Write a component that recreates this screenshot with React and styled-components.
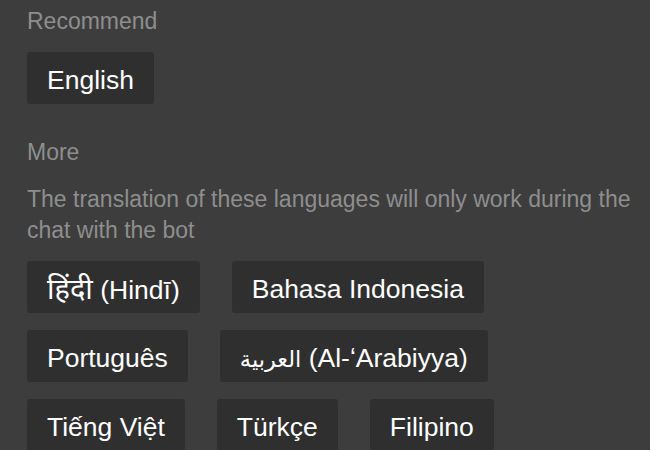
import React from 'react';
import styled, { createGlobalStyle } from 'styled-components';

const GlobalStyle = createGlobalStyle`
  html, body {
    margin: 0;
    padding: 0;
    background: #3d3d3d;
  }
  body {
    font-family: "Liberation Sans", Arial, "DejaVu Sans", "Noto Sans", sans-serif;
  }
`;

const Panel = styled.div`
  width: 650px;
  height: 450px;
  box-sizing: border-box;
  padding: 5px 8px 0 27px;
  background: #3d3d3d;
  overflow: hidden;
`;

const Label = styled.div`
  font-size: 23px;
  line-height: 32px;
  color: #8e8e8e;
  margin-top: ${(p) => p.$top || 0}px;
`;

const Note = styled.p`
  margin: 16px 0 0;
  font-size: 23px;
  line-height: 31px;
  color: #8e8e8e;
`;

const ChipList = styled.div`
  display: flex;
  flex-wrap: wrap;
  column-gap: 32px;
  row-gap: 17px;
  margin-top: ${(p) => p.$top}px;
`;

const Chip = styled.button`
  height: 52px;
  box-sizing: border-box;
  padding: 4px 20px 0;
  border: none;
  border-radius: 3px;
  background: #2f2f2f;
  color: #ffffff;
  font-family: inherit;
  font-size: 26.5px;
  line-height: 48px;
  white-space: nowrap;
  cursor: pointer;
`;

/* native-script part of a label, sized to match the Latin text */
const Script = styled.span`
  font-size: ${(p) => p.$size}px;
`;

const recommended = [{ name: 'English' }];

const more = [
  { native: 'हिंदी', size: 29, name: '(Hindī)' },
  { name: 'Bahasa Indonesia' },
  { name: 'Português' },
  { native: 'العربية', size: 22.5, name: '(Al-ʻArabiyya)' },
  { name: 'Tiếng Việt' },
  { name: 'Türkçe' },
  { name: 'Filipino' },
];

const LangChip = ({ lang }) => (
  <Chip>
    {lang.native && (
      <>
        <Script $size={lang.size}>{lang.native}</Script>{' '}
      </>
    )}
    {lang.name}
  </Chip>
);

export default function App() {
  return (
    <>
      <GlobalStyle />
      <Panel>
        <Label>Recommend</Label>
        <ChipList $top={15}>
          {recommended.map((lang) => (
            <LangChip key={lang.name} lang={lang} />
          ))}
        </ChipList>

        <Label $top={32}>More</Label>
        <Note>
          The translation of these languages will only work during the chat
          with the bot
        </Note>
        <ChipList $top={15}>
          {more.map((lang) => (
            <LangChip key={lang.name} lang={lang} />
          ))}
        </ChipList>
      </Panel>
    </>
  );
}
